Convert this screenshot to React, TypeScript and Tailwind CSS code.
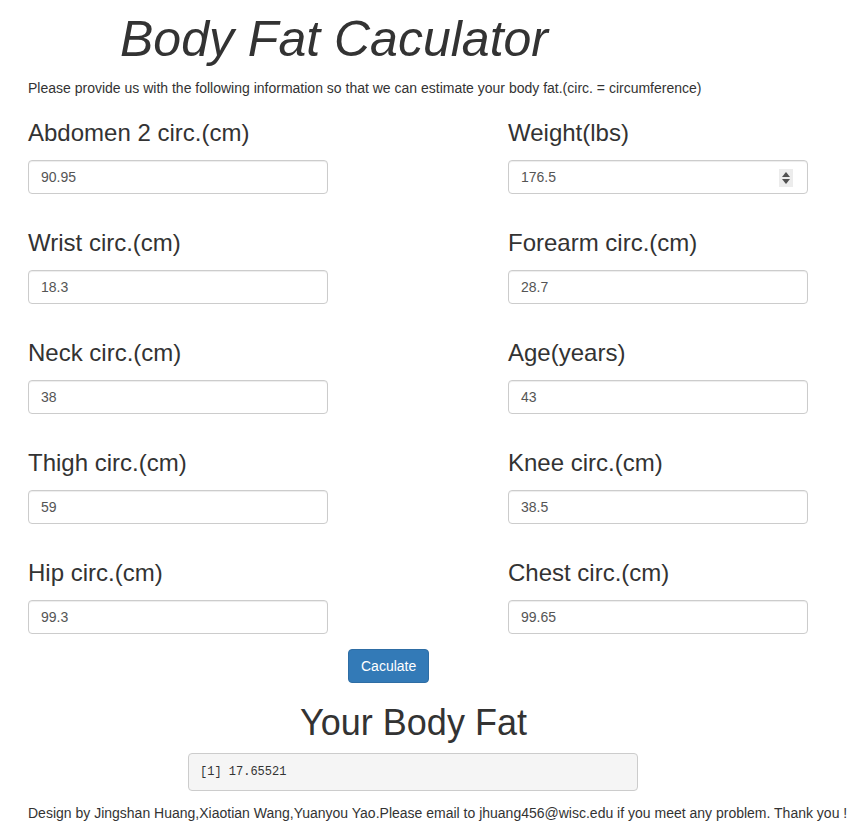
import React from "react";

const fields: [string, string, string, string][] = [
  ["Abdomen 2 circ.(cm)", "90.95", "Weight(lbs)", "176.5"],
  ["Wrist circ.(cm)", "18.3", "Forearm circ.(cm)", "28.7"],
  ["Neck circ.(cm)", "38", "Age(years)", "43"],
  ["Thigh circ.(cm)", "59", "Knee circ.(cm)", "38.5"],
  ["Hip circ.(cm)", "99.3", "Chest circ.(cm)", "99.65"],
];

function Spinner() {
  return (
    <div className="absolute right-[14px] top-[8px] w-[14px] h-[18px] bg-[#ececec] flex flex-col items-center justify-center gap-[2px]">
      <svg width="8" height="5" viewBox="0 0 8 5">
        <path d="M4 0 L8 5 L0 5 Z" fill="#505050" />
      </svg>
      <svg width="8" height="5" viewBox="0 0 8 5">
        <path d="M0 0 L8 0 L4 5 Z" fill="#505050" />
      </svg>
    </div>
  );
}

function Field({ label, value, spinner }: { label: string; value: string; spinner?: boolean }) {
  return (
    <div className="flex flex-col">
      <div className="text-[24px] leading-[26.4px] text-[#333] h-[26.4px]">{label}</div>
      <div className="relative mt-[13.6px] w-[300px] h-[34px] border border-[#ccc] rounded-[4px] bg-white shadow-[inset_0_1px_1px_rgba(0,0,0,0.075)] flex items-center px-[12px] text-[14px] text-[#555]">
        {value}
        {spinner && <Spinner />}
      </div>
    </div>
  );
}

export default function App() {
  return (
    <div
      className="bg-white w-[865px] h-[838px] text-[#333] text-[14px] leading-[20px]"
      style={{ fontFamily: '"Liberation Sans", Arial, Helvetica, sans-serif' }}
    >
      <div className="pt-[12px] pl-[120px]">
        <h1 className="italic text-[50px] leading-[55px] text-[#333] font-normal">Body Fat Caculator</h1>
      </div>
      <div className="pl-[28px] mt-[11px]">
        <p className="text-[14px] leading-[20px]">
          Please provide us with the following information so that we can estimate your body fat.(circ. = circumference)
        </p>
        <div className="mt-[22px] flex flex-col gap-[36px]">
          {fields.map(([l1, v1, l2, v2], i) => (
            <div key={i} className="grid grid-cols-[480px_1fr]">
              <Field label={l1} value={v1} />
              <Field label={l2} value={v2} spinner={i === 0} />
            </div>
          ))}
        </div>
        <div className="mt-[15px] pl-[320px]">
          <button className="h-[34px] px-[12px] bg-[#337ab7] border border-[#2e6da4] rounded-[4px] text-white text-[14px] leading-[20px]">
            Caculate
          </button>
        </div>
      </div>
      <div className="mt-[20px] flex justify-center">
        <h2 className="text-[36px] leading-[39.6px] font-normal text-[#333] ml-[-38px]">Your Body Fat</h2>
      </div>
      <div className="mt-[10px] pl-[188px]">
        <pre
          className="w-[450px] h-[38px] bg-[#f5f5f5] border border-[#ccc] rounded-[4px] px-[11px] flex items-center text-[12px] text-[#333]"
          style={{ fontFamily: '"Liberation Mono", "DejaVu Sans Mono", monospace' }}
        >
          [1] 17.65521
        </pre>
      </div>
      <p className="pl-[28px] mt-[12px] text-[14px] leading-[20px]">
        Design by Jingshan Huang,Xiaotian Wang,Yuanyou Yao.Please email to jhuang456@wisc.edu if you meet any problem. Thank you !
      </p>
    </div>
  );
}
